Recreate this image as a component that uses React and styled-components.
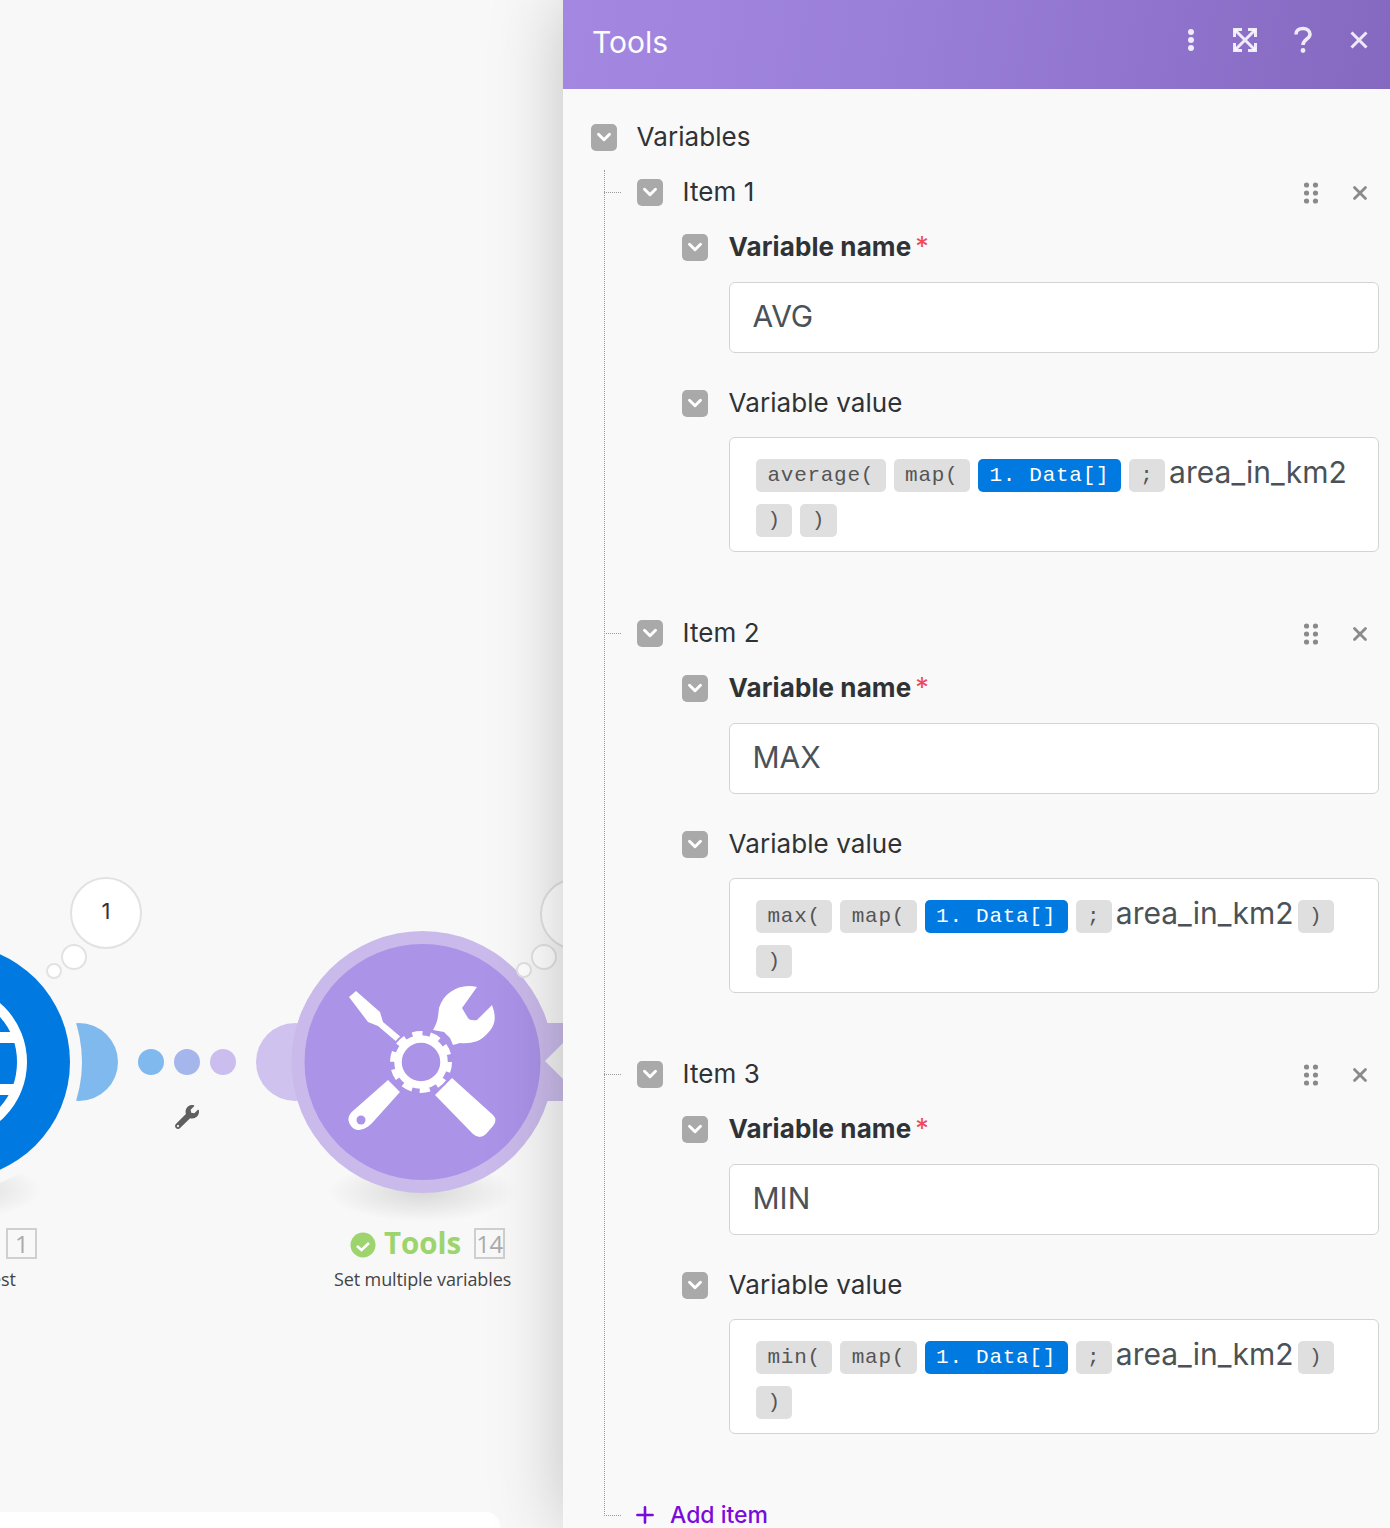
import React from "react";
import styled, { createGlobalStyle } from "styled-components";
import { ChevronDown, X, Plus } from "lucide-react";
import { FaWrench } from "react-icons/fa";

const Global = createGlobalStyle`
  html, body { margin: 0; padding: 0; height: 1528px; overflow: hidden; background: #f8f8f8; }
  #root { height: 1528px; }
  * { box-sizing: border-box; }
`;

const Page = styled.div`
  display: flex;
  width: 1390px;
  height: 1528px;
  overflow: hidden;
  font-family: Inter, "Liberation Sans", sans-serif;
`;

const Canvas = styled.div`
  position: relative;
  flex: 0 0 563px;
  height: 1528px;
  overflow: hidden;
  background: #f8f8f8;
`;

const Art = styled.svg`
  position: absolute;
  left: ${(p) => p.$x}px;
  top: ${(p) => p.$y}px;
  display: block;
  overflow: visible;
`;

const Bubble = styled.div`
  position: absolute;
  left: ${(p) => p.$x - p.$r}px;
  top: ${(p) => p.$y - p.$r}px;
  width: ${(p) => p.$r * 2}px;
  height: ${(p) => p.$r * 2}px;
  padding-bottom: 4px;
  border-radius: 50%;
  background: #fff;
  border: 2px solid #e2e2e2;
  display: flex;
  align-items: center;
  justify-content: center;
  font-size: 22px;
  color: #333;
`;

const Dot = styled.div`
  position: absolute;
  left: ${(p) => p.$x - 13}px;
  top: 1049px;
  width: 26px;
  height: 26px;
  border-radius: 50%;
  background: ${(p) => p.$color};
`;

const LinkTool = styled.div`
  position: absolute;
  left: 175px;
  top: 1105px;
  color: #5f5f5f;
  line-height: 0;
`;

const NodeTitle = styled.div`
  position: absolute;
  left: 384px;
  top: 1222px;
  font-family: "Open Sans", sans-serif;
  font-weight: 700;
  font-size: 29.5px;
  line-height: 42px;
  color: #9dd46d;
`;

const Counter = styled.div`
  position: absolute;
  left: ${(p) => p.$x}px;
  top: 1228px;
  width: 31px;
  height: 31px;
  border: 2px solid #cfcfcf;
  display: flex;
  align-items: center;
  justify-content: center;
  font-family: "Open Sans", sans-serif;
  font-size: 24px;
  letter-spacing: -0.5px;
  color: #aaa;
`;

const NodeSub = styled.div`
  position: absolute;
  left: ${(p) => p.$x}px;
  top: 1267px;
  font-family: "Open Sans", sans-serif;
  font-size: 18px;
  line-height: 25px;
  letter-spacing: -0.12px;
  color: #444;
  white-space: nowrap;
`;

const BottomBar = styled.div`
  position: absolute;
  left: 0;
  bottom: 0;
  width: 500px;
  height: 16px;
  background: #fff;
  border-top-right-radius: 14px;
`;

const Panel = styled.div`
  position: relative;
  z-index: 2;
  flex: 0 0 827px;
  height: 1528px;
  overflow: hidden;
  background: #f9f9f9;
  box-shadow: 0 0 70px rgba(0, 0, 0, 0.22);
`;

const Header = styled.div`
  display: flex;
  align-items: center;
  height: 89px;
  padding: 0 21px 0 29px;
  background: linear-gradient(100deg, #a487e0 0%, #9a7fd9 40%, #8568c0 100%);
  color: #fff;
`;

const Title = styled.div`
  flex: 1;
  font-size: 30px;
  line-height: 36px;
  margin-top: -6px;
  color: #fdfcff;
`;

const HeaderIcons = styled.div`
  display: flex;
  align-items: center;
  margin-top: -9px;
  color: rgba(255, 255, 255, 0.86);
`;

const HeadIcon = styled.svg`
  display: block;
  margin-left: ${(p) => p.$gap || 0}px;
`;

const Body = styled.div`
  padding: 34px 11px 0 28px;
`;

const Row = styled.div`
  display: flex;
  align-items: center;
  height: 28px;
  gap: ${(p) => p.$gap || 19.5}px;
`;

const Toggle = styled.div`
  flex: 0 0 26px;
  width: 26px;
  height: 27px;
  border-radius: 5px;
  background: #a9a9a9;
  color: #fff;
  display: flex;
  align-items: center;
  justify-content: center;
`;

const Label = styled.div`
  flex: 1;
  font-size: 26px;
  line-height: 28px;
  font-weight: ${(p) => (p.$bold ? 700 : 400)};
  letter-spacing: ${(p) => (p.$bold ? "0.1px" : "0.08px")};
  color: #2f3336;
  white-space: nowrap;
`;

const Req = styled.span`
  margin-left: 4px;
  font-size: 27px;
  line-height: 20px;
  font-weight: 400;
  color: #ef4a5c;
`;

const Tree = styled.div`
  position: relative;
  margin-top: 27px;
  margin-left: 13px;
  padding-left: 33px;
  &::before {
    content: "";
    position: absolute;
    left: 0;
    top: -8px;
    bottom: 13px;
    border-left: 1px dotted #9a9a9a;
  }
`;

const Item = styled.div`
  position: relative;
  margin-bottom: 67px;
  &::before {
    content: "";
    position: absolute;
    left: -33px;
    top: 14px;
    width: 17px;
    border-top: 1px dotted #9a9a9a;
  }
`;

const ItemActions = styled.div`
  display: flex;
  align-items: center;
  gap: 31px;
  margin-top: 2px;
  color: #8a8a8a;
  padding-right: 8px;
`;

const Field = styled.div`
  margin-left: 45px;
`;

const NameRow = styled(Row)`
  margin-top: 27px;
`;

const Input = styled.div`
  margin: 21px 0 0 47px;
  height: 71px;
  padding: 0 22.5px 4px;
  display: flex;
  align-items: center;
  background: #fff;
  border: 1px solid #d4d4d4;
  border-radius: 6px;
  font-size: 30px;
  color: #4a5258;
`;

const ValueRow = styled(Row)`
  margin-top: 36px;
`;

const ValueBox = styled.div`
  margin: 20px 0 0 47px;
  min-height: 115px;
  padding: 21px 26px 13px;
  display: flex;
  flex-wrap: wrap;
  align-items: center;
  align-content: flex-start;
  gap: 12px 8px;
  background: #fff;
  border: 1px solid #d4d4d4;
  border-radius: 6px;
`;

const Pill = styled.span`
  height: 33px;
  padding: 0 11.5px;
  display: inline-flex;
  align-items: center;
  border-radius: 5px;
  font-family: "Liberation Mono", monospace;
  font-size: 21px;
  letter-spacing: 0.72px;
  white-space: pre;
  background: ${(p) => (p.$blue ? "#0079e0" : "#dfdfdf")};
  color: ${(p) => (p.$blue ? "#fff" : "#555")};
`;

const Plain = styled.span`
  margin: 0 -4px;
  height: 33px;
  line-height: 26px;
  font-size: 30px;
  color: #4a5258;
`;

const AddRow = styled.div`
  position: relative;
  display: flex;
  align-items: center;
  gap: 12px;
  height: 28px;
  color: #7a0bdc;
  font-size: 23px;
  font-weight: 500;
  svg { margin-left: -5px; }
  &::before {
    content: "";
    position: absolute;
    left: -33px;
    top: 14px;
    width: 17px;
    border-top: 1px dotted #9a9a9a;
  }
`;

const items = [
  { n: 1, name: "AVG", fn: "average(", tail: [], wrap: [")", ")"] },
  { n: 2, name: "MAX", fn: "max(", tail: [")"], wrap: [")"] },
  { n: 3, name: "MIN", fn: "min(", tail: [")"], wrap: [")"] },
];

const Tog = () => (
  <Toggle>
    <ChevronDown size={22} strokeWidth={3.2} />
  </Toggle>
);

const Drag = () => (
  <svg width="14" height="22" viewBox="0 0 14 22" fill="currentColor">
    {[3, 11, 19].flatMap((y) => [2.5, 11.5].map((x) => <circle key={`${x}-${y}`} cx={x} cy={y} r="2.6" />))}
  </svg>
);

const GlobeNode = () => (
  <Art $x={-170} $y={920} width="300" height="300" viewBox="-170 920 300 300">
    <defs>
      <radialGradient id="gshadow">
        <stop offset="0%" stopColor="#000" stopOpacity="0.13" />
        <stop offset="100%" stopColor="#000" stopOpacity="0" />
      </radialGradient>
    </defs>
    <ellipse cx="-48" cy="1190" rx="90" ry="30" fill="url(#gshadow)" />
    <circle cx="79" cy="1062" r="39" fill="#7fb9ee" />
    <circle cx="-48" cy="1062" r="130" fill="#f8f8f8" />
    <circle cx="-48" cy="1062" r="118" fill="#0079e0" />
    <circle cx="-51" cy="1062" r="73" fill="none" stroke="#fff" strokeWidth="10" />
    <rect x="-120" y="1032" width="140" height="11" fill="#fff" />
    <rect x="-120" y="1084" width="140" height="11" fill="#fff" />
  </Art>
);

const ToolsNode = () => (
  <Art $x={240} $y={920} width="340" height="310" viewBox="240 920 340 310">
    <defs>
      <radialGradient id="tshadow">
        <stop offset="0%" stopColor="#000" stopOpacity="0.13" />
        <stop offset="100%" stopColor="#000" stopOpacity="0" />
      </radialGradient>
    </defs>
    <ellipse cx="422" cy="1192" rx="94" ry="30" fill="url(#tshadow)" />
    <circle cx="295" cy="1062" r="39" fill="#cfc2ef" />
    <path d="M530 1023 H590 V1101 H530 Z" fill="#c9bbe9" />
    <circle cx="422.5" cy="1062" r="131" fill="#cabaeb" />
    <path d="M545 1061 L570 1036 V1086 Z" fill="#f1f1f1" />
    <circle cx="422.5" cy="1062" r="118" fill="#ab93e8" />
    <path d="M349 997 L356 991 L380 1012 L383 1022 L402 1038 L398 1043 L378 1026 L368 1022 Z" fill="#fff" />
    <path d="M388 1080 L400 1092 L373 1122 C366 1130 356 1133 351 1126 C346 1119 349 1114 354 1110 Z" fill="#fff" />
    <circle cx="361" cy="1120" r="4.5" fill="#ab93e8" />
    <path d="M452 1078 L435 1095 L473 1134 Q480 1140 486 1134 L493 1126 Q498 1120 493 1115 Z" fill="#fff" />
    <path d="M477 987 C460 983 444 992 439 1008 C438 1016 438 1022 433 1030 L444 1032 L450 1038 L453 1045 L460 1043 C470 1044 480 1042 487 1034 C495 1026 497 1018 492 1005 L477 1020 Q470 1021 468 1018 L462 1008 Z" fill="#fff" />
    <circle cx="421" cy="1062" r="33" fill="#ab93e8" />
    <circle cx="421" cy="1062" r="23" fill="none" stroke="#fff" strokeWidth="7.5" />
    <circle cx="421" cy="1062" r="28" fill="none" stroke="#fff" strokeWidth="6" strokeDasharray="10 7.6" />
    <circle cx="363" cy="1245" r="12.5" fill="#9dd46d" />
    <path d="M357 1246 L361.5 1250 L369 1243" fill="none" stroke="#fff" strokeWidth="2.6" />
  </Art>
);

export default function App() {
  return (
    <Page>
      <Global />
      <Canvas>
        <GlobeNode />
        <ToolsNode />
        <Bubble $x={106} $y={913} $r={36}>1</Bubble>
        <Bubble $x={74} $y={957} $r={13} />
        <Bubble $x={54} $y={971} $r={8} />
        <Bubble $x={576} $y={914} $r={36} />
        <Bubble $x={544} $y={957} $r={13} />
        <Bubble $x={524} $y={970} $r={8} />
        <Dot $x={151} $color="#7fb9ee" />
        <Dot $x={187} $color="#a4b6ec" />
        <Dot $x={223} $color="#cbbeee" />
        <LinkTool><FaWrench size={24} /></LinkTool>
        <Counter $x={6}>1</Counter>
        <NodeSub $x={-9}>est</NodeSub>
        <NodeTitle>Tools</NodeTitle>
        <Counter $x={474}>14</Counter>
        <NodeSub $x={334}>Set multiple variables</NodeSub>
        <BottomBar />
      </Canvas>
      <Panel>
        <Header>
          <Title>Tools</Title>
          <HeaderIcons>
            <HeadIcon width="8" height="24" viewBox="0 0 8 24" fill="currentColor">
              <circle cx="4" cy="4" r="3" /><circle cx="4" cy="12" r="3" /><circle cx="4" cy="20" r="3" />
            </HeadIcon>
            <HeadIcon $gap={37} width="26" height="26" viewBox="0 0 26 26" fill="none" stroke="currentColor" strokeWidth="3">
              <path d="M2.5 10V2.5H10M16 2.5H23.5V10M23.5 16V23.5H16M10 23.5H2.5V16" />
              <path d="M3 3L23 23M23 3L3 23" />
            </HeadIcon>
            <HeadIcon $gap={35} width="20" height="28" viewBox="0 0 20 28" fill="none" stroke="currentColor" strokeWidth="3.6">
              <path d="M3 8.5C3 4.5 6 2.5 10 2.5C14 2.5 17 4.8 17 8.2C17 13 10 13.5 10 19" />
              <circle cx="10" cy="24.5" r="2.4" fill="currentColor" stroke="none" />
            </HeadIcon>
            <HeadIcon $gap={36} width="20" height="20" viewBox="0 0 20 20" fill="none" stroke="currentColor" strokeWidth="3">
              <path d="M2.5 2.5L17.5 17.5M17.5 2.5L2.5 17.5" />
            </HeadIcon>
          </HeaderIcons>
        </Header>
        <Body>
          <Row><Tog /><Label>Variables</Label></Row>
          <Tree>
            {items.map((it) => (
              <Item key={it.n}>
                <Row>
                  <Tog />
                  <Label>Item {it.n}</Label>
                  <ItemActions>
                    <Drag />
                    <X size={22} strokeWidth={3} />
                  </ItemActions>
                </Row>
                <Field>
                  <NameRow $gap={20.5}><Tog /><Label $bold>Variable name<Req>*</Req></Label></NameRow>
                  <Input>{it.name}</Input>
                  <ValueRow $gap={20.5}><Tog /><Label>Variable value</Label></ValueRow>
                  <ValueBox>
                    <Pill>{it.fn}</Pill>
                    <Pill>map(</Pill>
                    <Pill $blue>1. Data[]</Pill>
                    <Pill>;</Pill>
                    <Plain>area_in_km2</Plain>
                    {it.tail.map((t, i) => <Pill key={`t${i}`}>{t}</Pill>)}
                    {it.wrap.map((t, i) => <Pill key={`w${i}`}>{t}</Pill>)}
                  </ValueBox>
                </Field>
              </Item>
            ))}
            <AddRow><Plus size={26} strokeWidth={2.4} />Add item</AddRow>
          </Tree>
        </Body>
      </Panel>
    </Page>
  );
}
